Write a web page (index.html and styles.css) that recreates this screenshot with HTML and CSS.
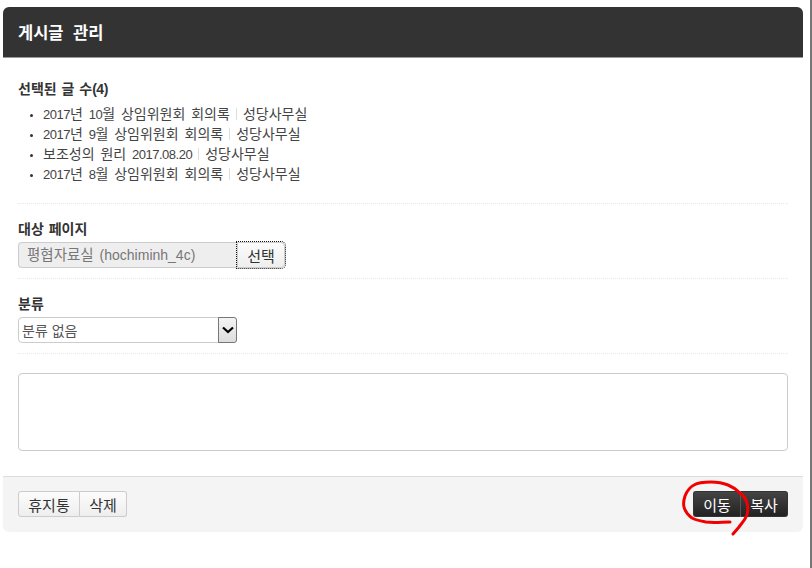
FILE: index.html
```html
<!DOCTYPE html>
<html lang="ko">
<head>
<meta charset="utf-8">
<title>게시글 관리</title>
<link rel="stylesheet" href="styles.css">
</head>
<body>
<div class="panel">
  <h1 class="head">게시글 관리</h1>
  <div class="body">
    <section class="sec sec-list">
      <h2 class="label">선택된 글 수<span class="count">(4)</span></h2>
      <ul class="posts">
        <li><span class="n">2017</span>년 <span class="n">10</span>월 상임위원회 회의록<span class="sep"></span>성당사무실</li>
        <li><span class="n">2017</span>년 <span class="n">9</span>월 상임위원회 회의록<span class="sep"></span>성당사무실</li>
        <li>보조성의 원리 <span class="n">2017.08.20</span><span class="sep"></span>성당사무실</li>
        <li><span class="n">2017</span>년 <span class="n">8</span>월 상임위원회 회의록<span class="sep"></span>성당사무실</li>
      </ul>
    </section>
    <section class="sec sec-target">
      <h2 class="label">대상 페이지</h2>
      <div class="picker">
        <div class="readonly"><span class="ko">평협자료실</span> (hochiminh_4c)</div>
        <button class="btn btn-pick" type="button">선택</button>
      </div>
    </section>
    <section class="sec sec-cat">
      <h2 class="label">분류</h2>
      <div class="select">
        <span class="select-text">분류 없음</span>
        <span class="select-arrow">
          <svg width="12" height="8" viewBox="0 0 12 8"><path d="M1 1.5 L6 6 L11 1.5" fill="none" stroke="#000" stroke-width="2.2"/></svg>
        </span>
      </div>
    </section>
    <div class="memo"></div>
  </div>
  <div class="foot">
    <div class="group">
      <button class="btn btn-trash" type="button">휴지통</button>
      <button class="btn btn-del" type="button">삭제</button>
    </div>
    <div class="group">
      <button class="btn dark btn-move" type="button">이동</button>
      <button class="btn dark btn-copy" type="button">복사</button>
    </div>
  </div>
</div>
<div class="edge"></div>
<svg class="scribble" width="812" height="568" viewBox="0 0 812 568">
  <path d="M730 522 C722 522 714 523 706 522 C700 521 696 520 692 518 C688 515 685 511 684 507 C683 503 684 499 685 496 C687 491 690 487 694 485 C699 482 705 482 711 482 C717 482 723 483 728 485 C733 487 737 490 740 493 C744 496 746 499 747 503 C748 507 748 511 747 515 C745 520 742 523 739 527 L733 534" fill="none" stroke="#f00000" stroke-width="3" stroke-linecap="round" stroke-linejoin="round"/>
</svg>
</body>
</html>
```
FILE: styles.css
```css
html, body { margin: 0; padding: 0; background: #fff; }
body {
  width: 812px;
  height: 568px;
  overflow: hidden;
  position: relative;
  font-family: "Liberation Sans", "Noto Sans CJK KR", sans-serif;
  font-size: 14px;
  color: #333;
}
.panel {
  width: 800px;
  margin: 7px 0 0 3px;
  display: flex;
  flex-direction: column;
}
.head {
  margin: 0;
  height: 50px;
  padding: 0 15px;
  line-height: 53px;
  font-size: 16.5px;
  font-weight: bold;
  word-spacing: 5px;
  color: #fff;
  background: #333;
  border-bottom: 1px solid #999;
  border-radius: 6px 6px 0 0;
}
.body { padding: 0 15px; }
.sec { border-bottom: 1px dotted #e8e8e8; box-sizing: border-box; }
.sec-list { height: 146px; }
.sec-target { height: 75px; }
.sec-cat { height: 75px; }
.label {
  margin: 0;
  font-size: 14px;
  line-height: 20px;
  font-weight: bold;
  word-spacing: 1px;
  color: #333;
}
.count { letter-spacing: -0.5px; }
.sec-list .label { padding-top: 21px; }
.sec-target .label { padding-top: 15px; }
.sec-cat .label { padding-top: 15px; }
.posts {
  list-style: none;
  margin: 5px 0 0;
  padding: 0 0 0 25px;
}
.posts li {
  height: 20px;
  line-height: 20px;
  position: relative;
  word-spacing: 2px;
  color: #444;
}
.posts li::before {
  content: "";
  position: absolute;
  left: -13px;
  top: 10px;
  width: 3px;
  height: 3px;
  border-radius: 50%;
  background: #333;
}
.n { font-size: 13px; letter-spacing: -0.5px; }
.sep {
  display: inline-block;
  width: 1px;
  height: 12px;
  background: #ddd;
  margin: 0 6px;
  vertical-align: -1px;
}
.picker { display: flex; margin-top: 3px; height: 26px; }
.readonly {
  width: 219px;
  box-sizing: border-box;
  height: 26px;
  line-height: 25px;
  padding-left: 8px;
  background: #eee;
  border: 1px solid #ccc;
  border-right: 0;
  border-radius: 4px 0 0 4px;
  color: #777;
  white-space: nowrap;
  word-spacing: 2px;
}
.ko { font-size: 14.5px; }
.btn {
  font-family: inherit;
  font-size: 15px;
  height: 26px;
  padding: 0;
  box-sizing: border-box;
  background: linear-gradient(#fcfcfc, #eee);
  border: 1px solid #ccc;
  color: #333;
  cursor: pointer;
}
.btn-pick {
  width: 48px;
  border-radius: 0 4px 4px 0;
  outline: 1px dotted #111;
  outline-offset: 0;
}
.select {
  display: flex;
  justify-content: space-between;
  width: 219px;
  height: 26px;
  margin-top: 3px;
  box-sizing: border-box;
  border: 1px solid #ccc;
  border-radius: 4px;
  background: #fff;
}
.select-text { padding-left: 3px; line-height: 26px; color: #555; }
.select-arrow {
  width: 17px;
  display: flex;
  align-items: center;
  justify-content: center;
  background: linear-gradient(#f4f4f4, #ddd);
  border: 1px solid #777;
  margin: -1px -1px -1px 0;
  border-radius: 0 3px 3px 0;
}
.memo {
  margin-top: 19px;
  height: 78px;
  box-sizing: border-box;
  border: 1px solid #ccc;
  border-radius: 4px;
  background: #fff;
}
.foot {
  margin-top: 25px;
  height: 56px;
  box-sizing: border-box;
  padding: 14px 15px 0;
  display: flex;
  justify-content: space-between;
  align-items: flex-start;
  background: #f4f4f4;
  border-top: 1px solid #ddd;
  border-radius: 0 0 6px 6px;
}
.group { display: flex; }
.btn-trash { width: 62px; border-radius: 3px 0 0 3px; }
.btn-del { width: 47px; border-left: 0; border-radius: 0 3px 3px 0; }
.dark {
  color: #fff;
  background: linear-gradient(#444, #222);
  border-color: #333;
}
.btn-move { width: 48px; border-radius: 3px 0 0 3px; border-right-color: #555; }
.btn-copy { width: 47px; border-left: 0; border-radius: 0 3px 3px 0; }
.edge {
  position: absolute;
  top: 0;
  right: 0;
  width: 2px;
  height: 568px;
  background: #777;
}
.scribble { position: absolute; top: 0; left: 0; pointer-events: none; }
```
